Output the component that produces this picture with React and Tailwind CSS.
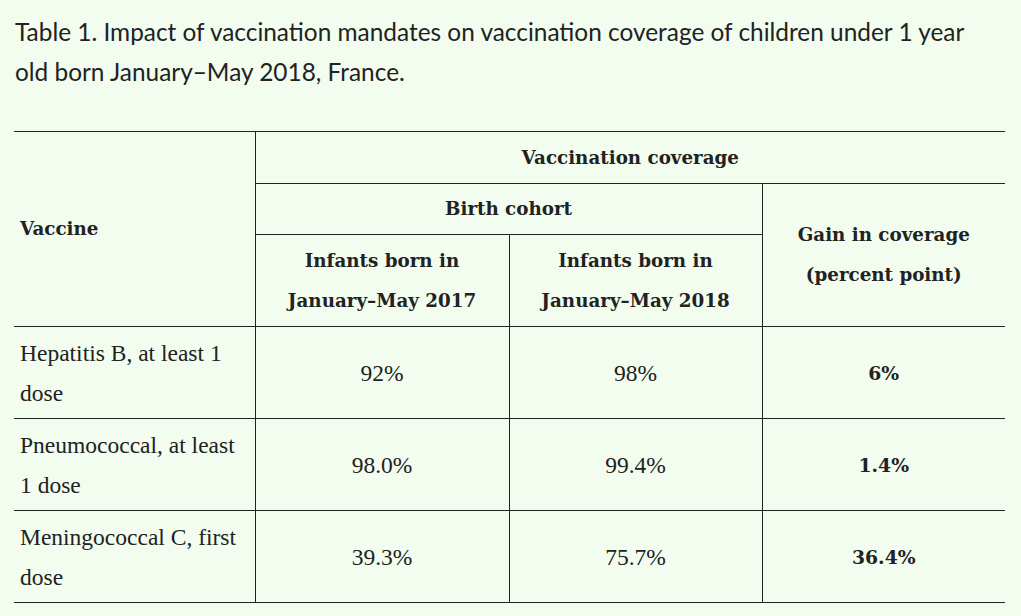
import React from "react";

const serifBold = { fontFamily: '"DejaVu Serif", serif' };
const serifReg = { fontFamily: '"Liberation Serif", serif' };

export default function App() {
  const b = "border-[#222]";
  const rows = [
    ["Hepatitis B, at least 1 dose", "92%", "98%", "6%"],
    ["Pneumococcal, at least 1 dose", "98.0%", "99.4%", "1.4%"],
    ["Meningococcal C, first dose", "39.3%", "75.7%", "36.4%"],
  ];
  return (
    <div className="w-[1021px] h-[616px] bg-[#f2fdef] text-[#222] overflow-hidden">
      <div
        className="pl-[15px] pr-[40px] pt-[12px] text-[24.4px] leading-[40px]"
        style={{ fontFamily: '"Lato", sans-serif' }}
      >
        Table 1. Impact of vaccination mandates on vaccination coverage of children under 1 year old born January–May 2018, France.
      </div>
      <table
        className="ml-[14px] mt-[39px] w-[991px] border-collapse leading-[40px] table-fixed"
      >
        <colgroup>
          <col className="w-[241px]" />
          <col className="w-[254px]" />
          <col className="w-[253px]" />
          <col className="w-[243px]" />
        </colgroup>
        <thead className="text-[18.3px]" style={serifBold}>
          <tr className="h-[52px]">
            <th rowSpan={3} className={`border-t border-b ${b} text-left font-bold px-[6px]`}>
              Vaccine
            </th>
            <th colSpan={3} className={`border-t border-l ${b} font-bold text-center`}>
              Vaccination coverage
            </th>
          </tr>
          <tr className="h-[51px]">
            <th colSpan={2} className={`border-t border-l ${b} font-bold text-center`}>
              Birth cohort
            </th>
            <th rowSpan={2} className={`border-t border-l border-b ${b} font-bold text-center px-[30px]`}>
              Gain in coverage (percent point)
            </th>
          </tr>
          <tr className="h-[92px]">
            <th className={`border-t border-l border-b ${b} font-bold text-center px-[20px]`}>
              Infants born in January–May 2017
            </th>
            <th className={`border-t border-l border-b ${b} font-bold text-center px-[20px]`}>
              Infants born in January–May 2018
            </th>
          </tr>
        </thead>
        <tbody className="text-[23.5px]" style={serifReg}>
          {rows.map((r) => (
            <tr key={r[0]} className="h-[92px]">
              <td className={`border-b ${b} text-left pl-[6px] pr-[10px]`}>{r[0]}</td>
              <td className={`border-b border-l ${b} text-center`}>{r[1]}</td>
              <td className={`border-b border-l ${b} text-center`}>{r[2]}</td>
              <td className={`border-b border-l ${b} text-center font-bold`} style={serifBold}>
                <span className="text-[18.8px]">{r[3]}</span>
              </td>
            </tr>
          ))}
        </tbody>
      </table>
    </div>
  );
}
